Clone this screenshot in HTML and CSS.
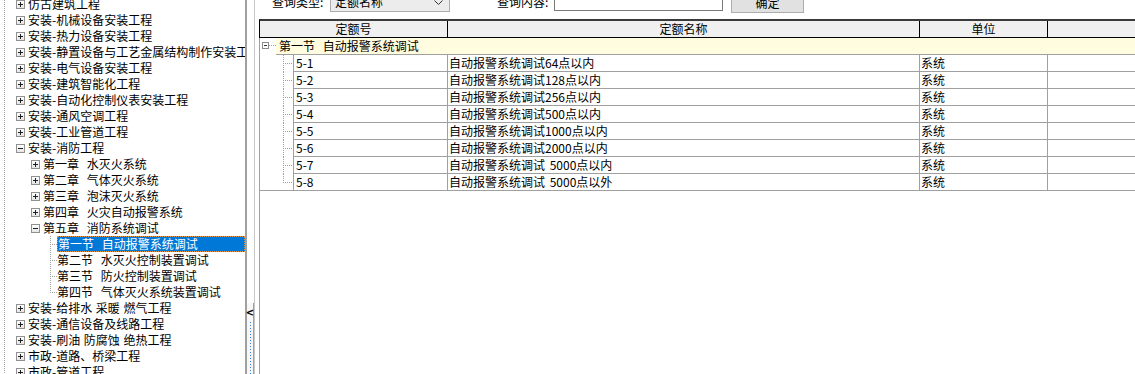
FILE: index.html
```html
<!DOCTYPE html>
<html lang="zh">
<head>
<meta charset="utf-8">
<title>定额查询</title>
<link rel="stylesheet" href="styles.css">
</head>
<body>
<div class="tree">
  <div class="tree-list">
    <div class="node l1"><span class="box plus"></span><span class="lbl">仿古建筑工程</span></div>
    <div class="node l1"><span class="box plus"></span><span class="lbl">安装-机械设备安装工程</span></div>
    <div class="node l1"><span class="box plus"></span><span class="lbl">安装-热力设备安装工程</span></div>
    <div class="node l1"><span class="box plus"></span><span class="lbl">安装-静置设备与工艺金属结构制作安装工程</span></div>
    <div class="node l1"><span class="box plus"></span><span class="lbl">安装-电气设备安装工程</span></div>
    <div class="node l1"><span class="box plus"></span><span class="lbl">安装-建筑智能化工程</span></div>
    <div class="node l1"><span class="box plus"></span><span class="lbl">安装-自动化控制仪表安装工程</span></div>
    <div class="node l1"><span class="box plus"></span><span class="lbl">安装-通风空调工程</span></div>
    <div class="node l1"><span class="box plus"></span><span class="lbl">安装-工业管道工程</span></div>
    <div class="node l1"><span class="box"></span><span class="lbl">安装-消防工程</span></div>
    <div class="node l2"><span class="box plus"></span><span class="lbl wide">第一章 水灭火系统</span></div>
    <div class="node l2"><span class="box plus"></span><span class="lbl wide">第二章 气体灭火系统</span></div>
    <div class="node l2"><span class="box plus"></span><span class="lbl wide">第三章 泡沫灭火系统</span></div>
    <div class="node l2"><span class="box plus"></span><span class="lbl wide">第四章 火灾自动报警系统</span></div>
    <div class="node l2"><span class="box"></span><span class="lbl wide">第五章 消防系统调试</span></div>
    <div class="node l3 first"><span class="lbl wide sel">第一节 自动报警系统调试</span></div>
    <div class="node l3"><span class="lbl wide">第二节 水灭火控制装置调试</span></div>
    <div class="node l3"><span class="lbl wide">第三节 防火控制装置调试</span></div>
    <div class="node l3 last"><span class="lbl wide">第四节 气体灭火系统装置调试</span></div>
    <div class="node l1"><span class="box plus"></span><span class="lbl narrow">安装-给排水 采暖 燃气工程</span></div>
    <div class="node l1"><span class="box plus"></span><span class="lbl">安装-通信设备及线路工程</span></div>
    <div class="node l1"><span class="box plus"></span><span class="lbl narrow">安装-刷油 防腐蚀 绝热工程</span></div>
    <div class="node l1"><span class="box plus"></span><span class="lbl">市政-道路、桥梁工程</span></div>
    <div class="node l1"><span class="box plus"></span><span class="lbl">市政-管道工程</span></div>
  </div>
</div>
<div class="splitter">
  <div class="split-btn">
    <span class="arrow">&lt;</span>
    <span class="grip"></span>
  </div>
</div>
<div class="main">
  <div class="query">
    <span class="qlabel">查询类型:</span>
    <div class="combo"><span class="combo-text">定额名称</span><svg class="chev" width="9" height="5" viewBox="0 0 9 5"><path d="M0.5 0.5 L4.5 4.5 L8.5 0.5" fill="none" stroke="#333" stroke-width="1"/></svg></div>
    <span class="qlabel q2">查询内容:</span>
    <div class="input"></div>
    <div class="btn">确定</div>
  </div>
  <div class="grid">
    <div class="thead">
      <div class="th h1">定额号</div>
      <div class="th h2">定额名称</div>
      <div class="th h3">单位</div>
      <div class="th h4"></div>
    </div>
    <div class="tbody">
      <div class="grow">
        <div class="ggutter"><span class="gbox"></span></div>
        <div class="gcell">第一节 自动报警系统调试</div>
      </div>
      <div class="row"><div class="gutter"></div><div class="c c1">5-1</div><div class="c c2">自动报警系统调试64点以内</div><div class="c c3">系统</div><div class="c c4"></div></div>
      <div class="row"><div class="gutter"></div><div class="c c1">5-2</div><div class="c c2">自动报警系统调试128点以内</div><div class="c c3">系统</div><div class="c c4"></div></div>
      <div class="row"><div class="gutter"></div><div class="c c1">5-3</div><div class="c c2">自动报警系统调试256点以内</div><div class="c c3">系统</div><div class="c c4"></div></div>
      <div class="row"><div class="gutter"></div><div class="c c1">5-4</div><div class="c c2">自动报警系统调试500点以内</div><div class="c c3">系统</div><div class="c c4"></div></div>
      <div class="row"><div class="gutter"></div><div class="c c1">5-5</div><div class="c c2">自动报警系统调试1000点以内</div><div class="c c3">系统</div><div class="c c4"></div></div>
      <div class="row"><div class="gutter"></div><div class="c c1">5-6</div><div class="c c2">自动报警系统调试2000点以内</div><div class="c c3">系统</div><div class="c c4"></div></div>
      <div class="row"><div class="gutter"></div><div class="c c1">5-7</div><div class="c c2 sp">自动报警系统调试 5000点以内</div><div class="c c3">系统</div><div class="c c4"></div></div>
      <div class="row last"><div class="gutter"></div><div class="c c1">5-8</div><div class="c c2 sp">自动报警系统调试 5000点以外</div><div class="c c3">系统</div><div class="c c4"></div></div>
    </div>
  </div>
</div>
</body>
</html>
```
FILE: styles.css
```css
* { box-sizing: border-box; }
html, body { margin: 0; padding: 0; }
body {
  width: 1135px;
  height: 374px;
  overflow: hidden;
  background: #fff;
  color: #000;
  font-family: "Noto Sans CJK SC", "Liberation Sans", sans-serif;
  font-size: 12px;
  line-height: 16px;
  display: flex;
}

/* ---------- left tree ---------- */
.tree {
  width: 247px;
  flex: none;
  height: 374px;
  overflow: hidden;
  border-right: 2px solid #a0a0a0;
}
.tree-list {
  margin-top: -4px;
  background-image: repeating-linear-gradient(to bottom, #a0a0a0 0 1px, transparent 1px 2px);
  background-size: 1px 100%;
  background-position: 4px 0;
  background-repeat: no-repeat;
}
.node {
  height: 16px;
  display: flex;
  align-items: center;
  white-space: nowrap;
}
.l1 { padding-left: 16px; }
.l2 { padding-left: 31px; }
.l3 {
  padding-left: 57px;
  background-image:
    repeating-linear-gradient(to bottom, #a0a0a0 0 1px, transparent 1px 2px),
    repeating-linear-gradient(to right, #a0a0a0 0 1px, transparent 1px 2px);
  background-size: 1px 100%, 7px 1px;
  background-position: 50px 0, 50px 8px;
  background-repeat: no-repeat;
}
.l3.last { background-size: 1px 9px, 7px 1px; }
.box {
  width: 9px;
  height: 9px;
  flex: none;
  border: 1px solid #919191;
  background: linear-gradient(#ffffff, #e6e6e6);
  position: relative;
  margin-right: 3px;
}
.box::before {
  content: "";
  position: absolute;
  left: 1px;
  top: 3px;
  width: 5px;
  height: 1px;
  background: #1e1e1e;
}
.box.plus::after {
  content: "";
  position: absolute;
  left: 3px;
  top: 1px;
  width: 1px;
  height: 5px;
  background: #1e1e1e;
}
.lbl { line-height: 16px; }
.wide { word-spacing: 5px; }
.narrow { word-spacing: 1px; }
.sel {
  flex: 1;
  height: 16px;
  padding-left: 1px;
  background: #0078d7;
  color: #fff;
  outline: 1px dotted #e39a4c;
  outline-offset: -1px;
}

/* ---------- splitter ---------- */
.splitter {
  width: 8px;
  flex: none;
  height: 374px;
  border-right: 1px solid #c8c8c8;
  display: flex;
  flex-direction: column;
}
.split-btn {
  margin-top: 303px;
  flex: 1;
  border-right: 1px solid #a0a0a0;
  background: #f7f7f7;
  display: flex;
  flex-direction: column;
  align-items: center;
}
.arrow {
  font-family: "DejaVu Sans", sans-serif;
  font-weight: bold;
  font-size: 10px;
  line-height: 12px;
  margin-top: 4px;
  color: #000;
}
.grip {
  margin-top: 3px;
  width: 1px;
  flex: 1;
  background-image: repeating-linear-gradient(to bottom, #2f7fd6 0 1px, transparent 1px 3px);
}

/* ---------- main ---------- */
.main {
  flex: 1;
  height: 374px;
  padding-left: 4px;
  display: flex;
  flex-direction: column;
}
.query {
  margin-top: -9px;
  height: 22px;
  display: flex;
  align-items: flex-start;
  padding-left: 13px;
  flex: none;
}
.qlabel {
  width: 58px;
  line-height: 21px;
  white-space: nowrap;
}
.q2 { margin-left: 47px; width: 57px; }
.combo {
  width: 120px;
  height: 21px;
  border: 1px solid #adadad;
  background: #ececec;
  display: flex;
  align-items: center;
  justify-content: space-between;
  padding: 0 6px 0 4px;
}
.combo-text { line-height: 19px; }
.chev { display: block; margin-top: 1px; }
.input {
  width: 169px;
  height: 20px;
  border: 1px solid #7a7a7a;
  background: #fff;
}
.btn {
  margin-left: 8px;
  width: 73px;
  height: 22px;
  border: 1px solid #adadad;
  background: #e1e1e1;
  text-align: center;
  line-height: 22px;
}

.grid {
  margin-top: 6px;
  flex: 1;
  display: flex;
  flex-direction: column;
}
.thead {
  height: 19px;
  flex: none;
  display: flex;
  border-top: 2px solid #3a3a3a;
  border-bottom: 1px solid #000;
  border-left: 1px solid #000;
  background: #f0f0f0;
}
.th {
  height: 16px;
  line-height: 16px;
  text-align: center;
  border-right: 1px solid #000;
}
.h1 { width: 188px; }
.h2 { width: 472px; }
.h3 { width: 128px; }
.h4 { flex: 1; border-right: none; }

.tbody {
  flex: 1;
  border-left: 1px solid #a0a0a0;
}
.grow {
  height: 17px;
  display: flex;
}
.ggutter {
  width: 16px;
  flex: none;
  padding: 4px 0 0 2px;
  background-image: repeating-linear-gradient(to right, #a0a0a0 0 1px, transparent 1px 2px);
  background-size: 7px 1px;
  background-position: 9px 7px;
  background-repeat: no-repeat;
}
.gbox {
  display: block;
  width: 7px;
  height: 7px;
  border: 1px solid #8c8c8c;
  background: #fff;
  position: relative;
}
.gbox::before {
  content: "";
  position: absolute;
  left: 1px;
  top: 2px;
  width: 3px;
  height: 1px;
  background: #333;
}
.gcell {
  flex: 1;
  background: #fffce0;
  border-bottom: 1px solid #a0a0a0;
  padding-left: 3px;
  word-spacing: 5px;
  white-space: nowrap;
}
.row {
  height: 17px;
  display: flex;
}
.gutter {
  width: 33px;
  flex: none;
  background-image:
    repeating-linear-gradient(to bottom, #a0a0a0 0 1px, transparent 1px 2px),
    repeating-linear-gradient(to right, #a0a0a0 0 1px, transparent 1px 2px);
  background-size: 1px 100%, 10px 1px;
  background-position: 23px 0, 23px 8px;
  background-repeat: no-repeat;
}
.row.last .gutter {
  background-size: 1px 9px, 10px 1px;
  border-bottom: 1px solid #a0a0a0;
}
.c {
  height: 17px;
  border-left: 1px solid #a0a0a0;
  border-bottom: 1px solid #a0a0a0;
  white-space: nowrap;
  overflow: hidden;
  padding-left: 1px;
}
.c1 { width: 154px; padding-left: 2px; }
.c2 { width: 472px; }
.c3 { width: 128px; }
.c4 { flex: 1; }
.sp { word-spacing: 2px; }
```
